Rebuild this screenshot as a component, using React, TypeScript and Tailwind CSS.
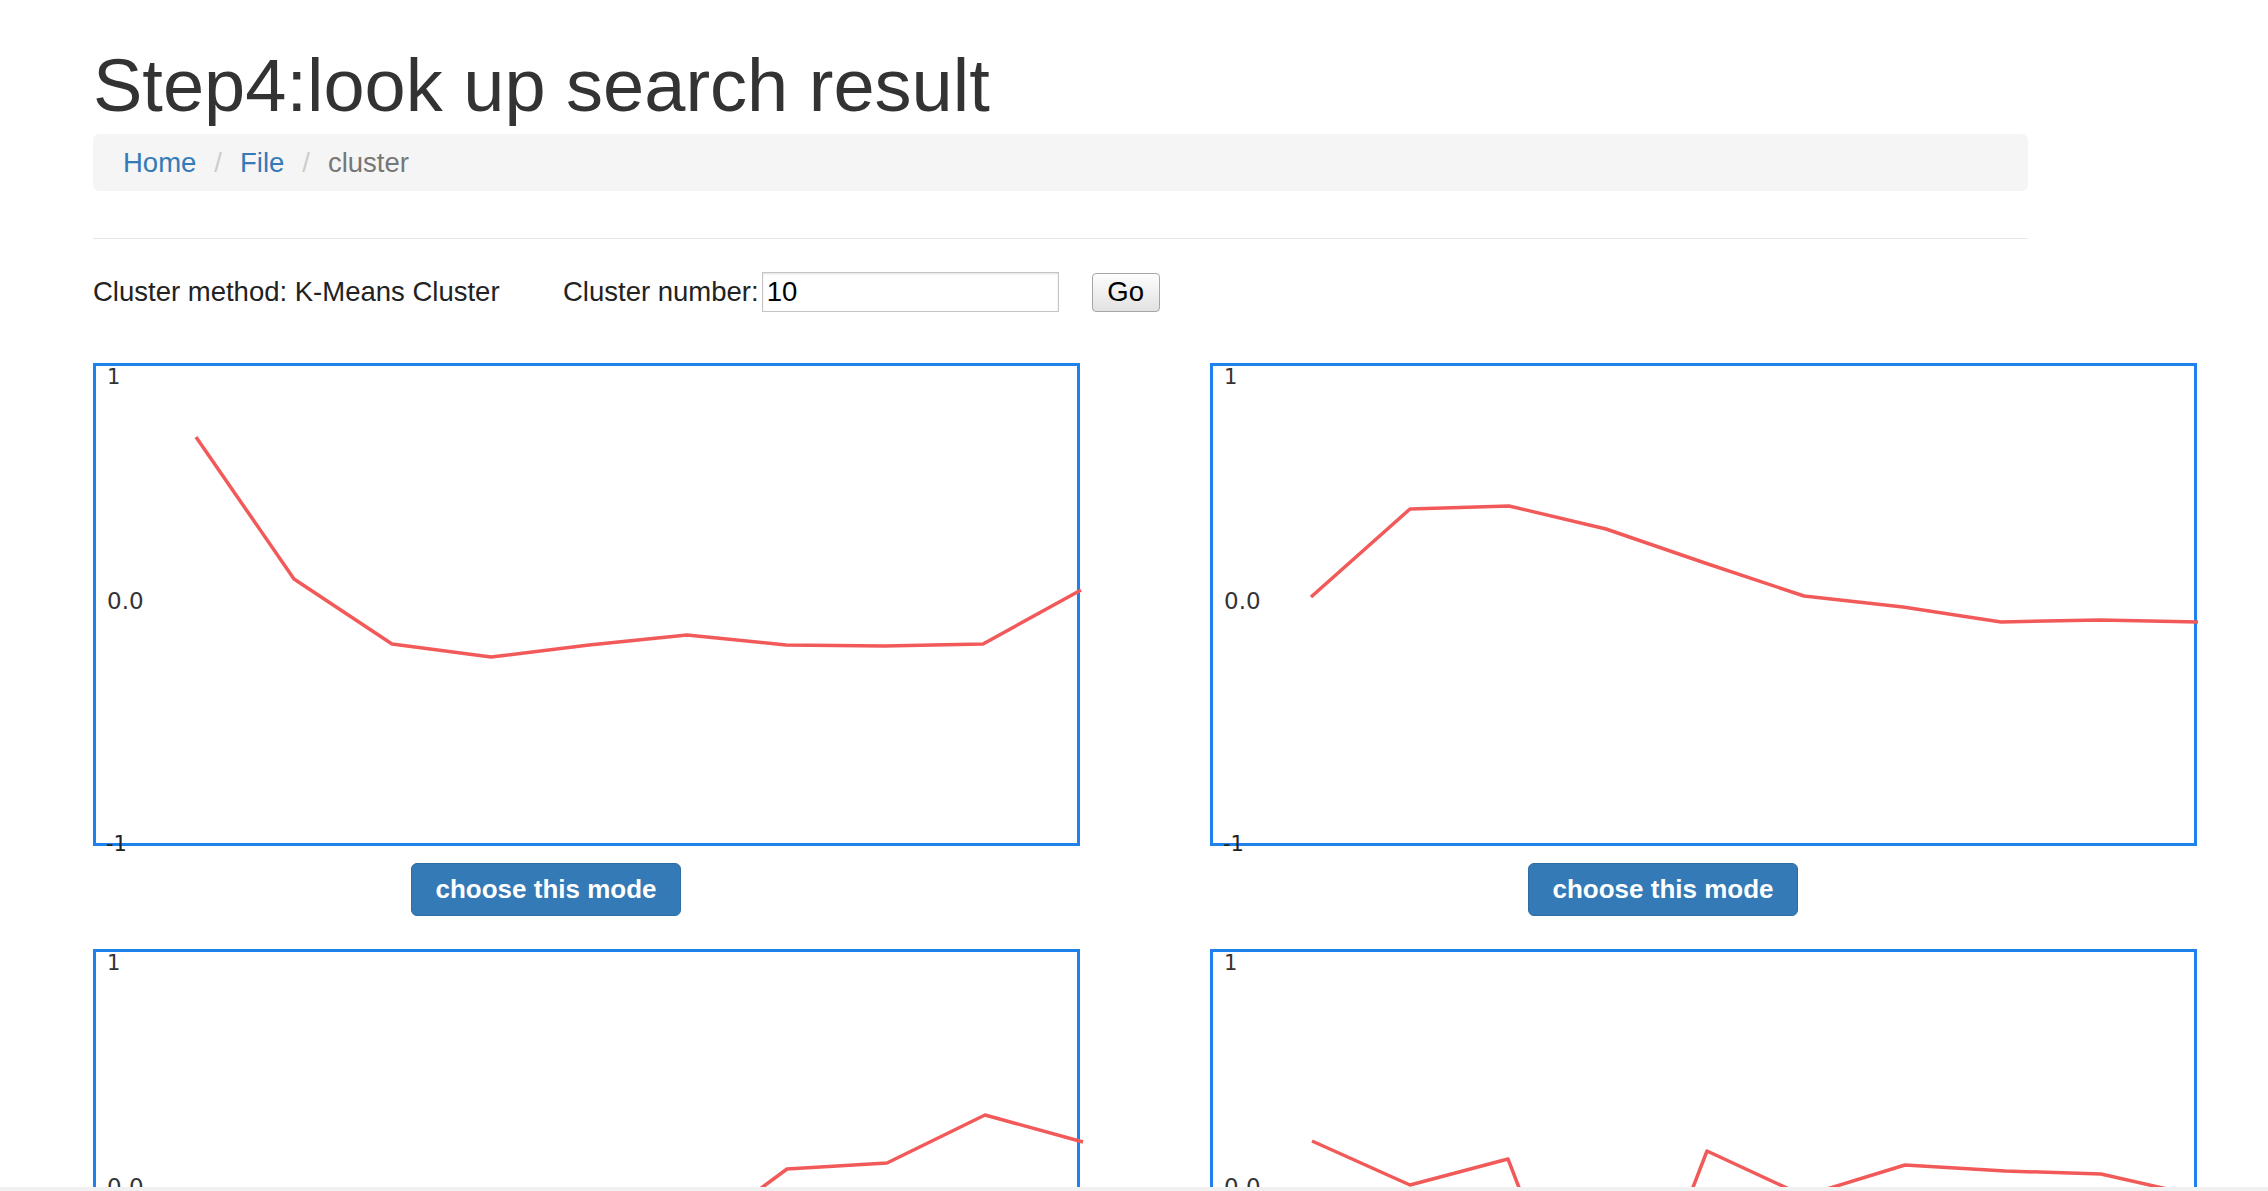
import React from "react";

type Pt = [number, number];

const charts: Pt[][] = [
  [[100, 71], [198, 213], [296, 278], [395, 291], [493, 279], [591, 269], [690, 279], [788, 280], [887, 278], [985, 224]],
  [[98, 231], [197, 143], [296, 140], [393, 163], [492, 197], [591, 230], [690, 241], [788, 256], [887, 254], [985, 256]],
  [[98, 330], [197, 360], [296, 345], [395, 370], [493, 340], [591, 291], [691, 217], [791, 211], [889, 163], [987, 190]],
  [[99, 189], [197, 233], [295, 207], [393, 461], [494, 199], [591, 244], [692, 213], [792, 219], [888, 222], [985, 244]],
];

function Chart({ points }: { points: Pt[] }) {
  return (
    <div className="w-[987px] h-[483px] border-[3px] border-[#1e82ec] bg-white">
      <svg width="981" height="477" className="block overflow-visible font-['DejaVu_Sans',sans-serif]">
        <polyline
          points={points.map((p) => p.join(",")).join(" ")}
          fill="none"
          stroke="#f25a5a"
          strokeWidth="3.5"
          strokeLinejoin="round"
        />
        <text x="11" y="18" fontSize="21" fill="#333">1</text>
        <text x="11" y="243" fontSize="23" fill="#333">0.0</text>
        <text x="10" y="485" fontSize="21" fill="#222">-1</text>
      </svg>
    </div>
  );
}

function Cell({ points }: { points: Pt[] }) {
  return (
    <div className="flex flex-col">
      <Chart points={points} />
      <button className="ml-[318px] mt-[17px] w-[270px] h-[53px] bg-[#337ab7] border border-[#2e6da4] rounded-[6px] text-white text-[26px] font-bold flex items-center justify-center">
        choose this mode
      </button>
    </div>
  );
}

export default function App() {
  return (
    <div className="h-screen flex flex-col bg-white overflow-hidden font-['Liberation_Sans',Arial,sans-serif] text-[#333]">
      <div className="flex-1 overflow-hidden">
        <div className="ml-[93px] pt-[47px]">
          <h1 className="text-[74px] leading-[77px] font-normal text-[#333]">Step4:look up search result</h1>
          <div className="mt-[10px] w-[1935px] h-[57px] rounded-[6px] bg-[#f5f5f5] pl-[30px] flex items-center text-[27.5px]">
            <span className="text-[#337ab7]">Home</span>
            <span className="px-[18px] text-[#ccc]">/</span>
            <span className="text-[#337ab7]">File</span>
            <span className="px-[18px] text-[#ccc]">/</span>
            <span className="text-[#777]">cluster</span>
          </div>
          <div className="mt-[47px] w-[1935px] h-px bg-[#e8e8e8]"></div>
          <div className="mt-[33px] h-[40px] flex items-center text-[27.5px] text-[#222]">
            <span className="w-[470px]">Cluster method: K-Means Cluster</span>
            <span>Cluster number:</span>
            <input
              readOnly
              defaultValue="10"
              className="ml-[3px] w-[297px] h-[40px] border border-[#c4c4c4] shadow-[inset_0_1px_2px_rgba(0,0,0,0.12)] pl-[4px] text-black outline-none"
            />
            <button className="ml-[33px] w-[68px] h-[39px] border border-[#a6a6a6] rounded-[4px] bg-linear-to-b from-[#fdfdfd] to-[#e2e2e2] text-black flex items-center justify-center">
              Go
            </button>
          </div>
          <div className="mt-[51px] grid grid-cols-[987px_987px] gap-x-[130px] gap-y-[33px]">
            {charts.map((p, i) => (
              <Cell key={i} points={p} />
            ))}
          </div>
        </div>
      </div>
      <div className="h-[4px] bg-[#f0f0f0]"></div>
    </div>
  );
}
